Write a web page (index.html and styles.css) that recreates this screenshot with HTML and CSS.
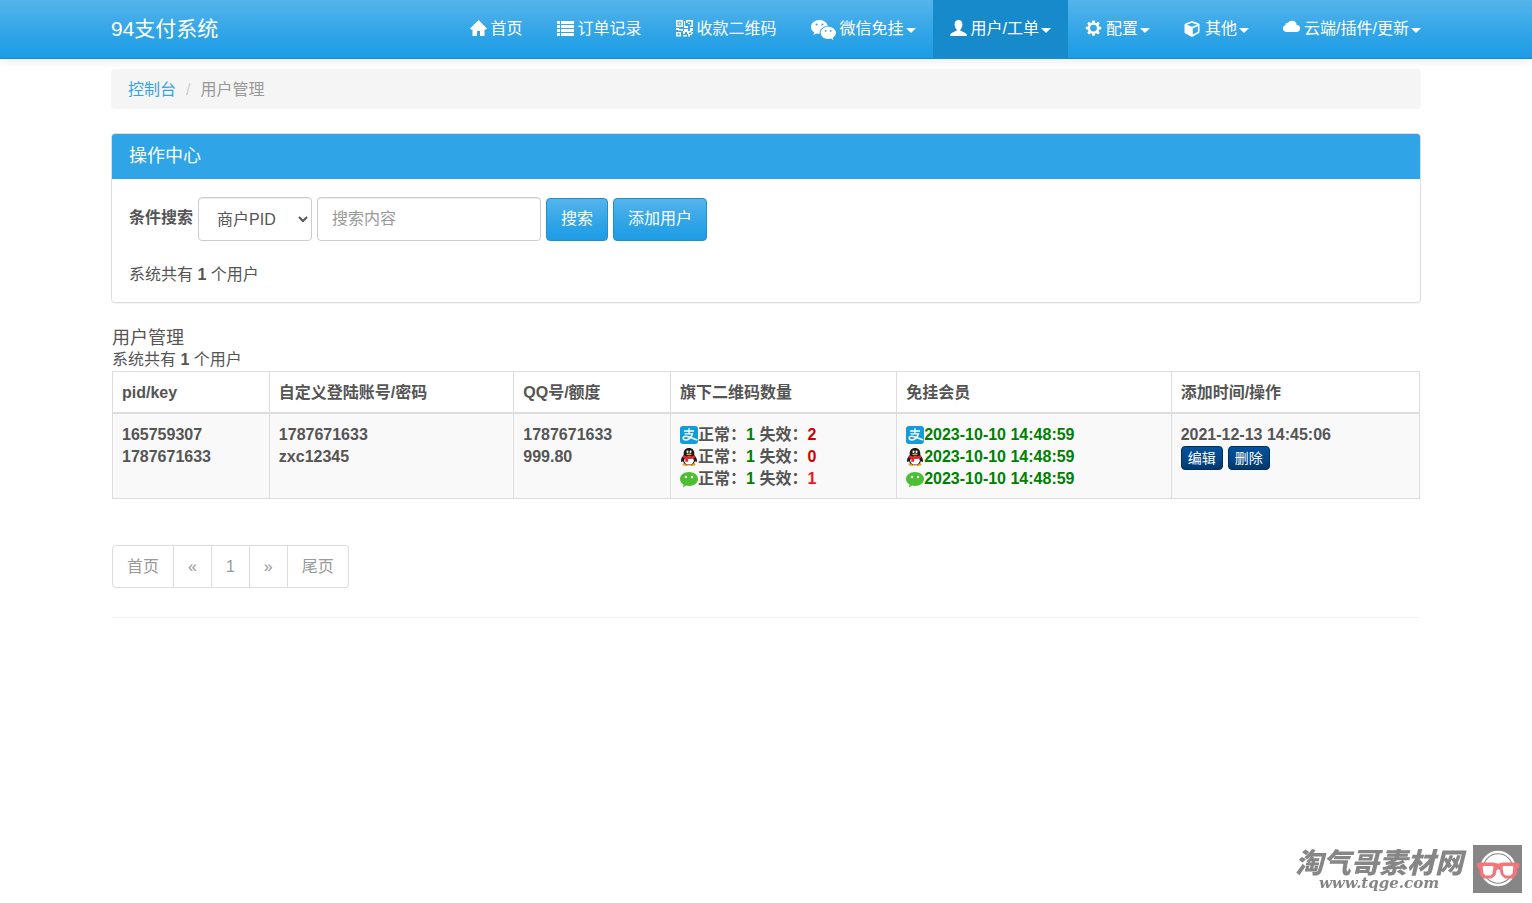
FILE: index.html
```html
<!DOCTYPE html>
<html lang="zh-CN">
<head>
<meta charset="utf-8">
<title>用户管理</title>
<link rel="stylesheet" href="styles.css">
</head>
<body>
<svg class="sprite" aria-hidden="true">
  <symbol id="alipay" viewBox="0 0 18 18">
    <rect width="18" height="18" rx="3" fill="#169bd9"/>
    <g fill="none" stroke="#fff" stroke-linecap="round">
      <path d="M4.500 5h9M9 2.600v5.200M5 7.800h7.600" stroke-width="1.300"/>
      <path d="M12.400 7.800c-1 3.400-3.400 6.200-6.600 6.200-3.600 0-3.300-3.800 0-3.800 3 0 5.700 2 11 3.600" stroke-width="1.500"/>
    </g>
  </symbol>
  <symbol id="qq" viewBox="0 0 18 18">
    <ellipse cx="6" cy="16.300" rx="3.600" ry="1.600" fill="#f4a024"/>
    <ellipse cx="12" cy="16.300" rx="3.600" ry="1.600" fill="#f4a024"/>
    <path d="M9 0c3.600 0 5.300 2.500 5.300 5.300v2c1.600 1.500 3 4 2.700 6-.3 1.300-1.300.7-2-.4-.6 2.700-2.800 4.100-6 4.100s-5.400-1.400-6-4.100c-.7 1.100-1.700 1.700-2 .4-.3-2 1.100-4.500 2.700-6v-2C3.700 2.500 5.400 0 9 0z" fill="#1c1a1a"/>
    <ellipse cx="9" cy="12.600" rx="4.800" ry="4" fill="#fff"/>
    <ellipse cx="7.500" cy="3.800" rx="1" ry="1.400" fill="#fff"/>
    <ellipse cx="10.500" cy="3.800" rx="1" ry="1.400" fill="#fff"/>
    <ellipse cx="9" cy="6.300" rx="2.800" ry=".9" fill="#f4a024"/>
    <path d="M3.400 7.300c3.200 1.700 8 1.700 11.200 0l.8 2.200c-2.100 1.300-4.700 1.600-7.300 1.500v2.700H5.300v-3.200l-2.700-1z" fill="#e5252c"/>
  </symbol>
  <symbol id="wx" viewBox="0 0 18 18">
    <path d="M9 2c5 0 9 3.100 9 7s-4 7-9 7c-1 0-2-.1-2.900-.4L3 17.500l.6-2.900C1.400 13.300 0 11.300 0 9c0-3.900 4-7 9-7z" fill="#4cbf33"/>
    <circle cx="6" cy="7" r="1.200" fill="#fff"/><circle cx="12" cy="7" r="1.200" fill="#fff"/>
  </symbol>
</svg>

<header class="navbar">
  <div class="container navbar-inner">
    <a class="brand" href="#">94支付系统</a>
    <nav class="nav">
      <a href="#"><svg class="ico" viewBox="0 0 17 17"><path fill="currentColor" d="M8.500 0 17 8.500l-.9.900h-1.600V16H10v-5H7v5H2.500V9.400H.9L0 8.500z"/></svg>首页</a>
      <a href="#"><svg class="ico" viewBox="0 0 17 17"><path fill="currentColor" d="M0 1h3v3H0zm4 0h13v3H4zM0 5h3v3H0zm4 0h13v3H4zM0 9h3v3H0zm4 0h13v3H4zm-4 4h3v3H0zm4 0h13v3H4z"/></svg>订单记录</a>
      <a href="#"><svg class="ico" viewBox="0 0 17 17"><path fill="currentColor" fill-rule="evenodd" d="M0 0h7v7H0zm1.500 1.500v4h4v-4zM2.500 2.500h2v2h-2zM10 0h7v7h-3V5.500h1.500v-4h-4V3H10zM8 1h1v5h3v2H8zM12 3h2v1h-2zM0 8h3v1h4v2H5v-.5H2V10H0zM0 12h5v4.500H0zm1.500 1.200v2h2v-2zM8 9h4v2h2V8h3v3h-1.500v1.500H13V14h-2v-2H9v2H7v-3h1zM8 15h3v1.500H7V15zM15 12h2v1.500h-1V15h-2v1.500h-2V14h3z"/></svg>收款二维码</a>
      <a href="#"><svg class="ico ico-wide" viewBox="0 0 25 21"><path fill="currentColor" fill-rule="evenodd" d="M8.500 1C3.800 1 0 4 0 7.900c0 2.200 1.200 4.100 3.100 5.400L2.400 16l3-1.600c1 .3 2.100.4 3.200.4-.3-4.700 3.800-7.900 8.200-7.900C16 3.500 12.600 1 8.500 1zM5.600 4.400a1.100 1.100 0 1 1 0 2.200 1.100 1.100 0 0 1 0-2.200zm5.800 0a1.100 1.100 0 1 1 0 2.200 1.100 1.100 0 0 1 0-2.200zM17.200 7.700c-4 0-7.500 2.700-7.500 6.100s3.400 6.200 7.500 6.200c.9 0 1.700-.1 2.500-.4l2.700 1.400-.6-2.300c1.600-1.200 3.200-2.800 3.200-4.900 0-3.400-3.700-6.100-7.800-6.100zM14.600 11a.9.900 0 1 1 0 1.800.9.900 0 0 1 0-1.800zm5.100 0a.9.900 0 1 1 0 1.800.9.900 0 0 1 0-1.800z"/></svg>微信免挂<i class="caret"></i></a>
      <a href="#" class="active"><svg class="ico" viewBox="0 0 17 17"><path fill="currentColor" d="M8.500 0C11 0 12.400 1.800 12.400 4.300c0 2.200-.7 4-2 5.200v1.300c2.600 1 5.600 2.200 6.200 3.400.3.600.4 1.800.4 1.800H0s.1-1.200.4-1.800c.6-1.200 3.600-2.400 6.200-3.400V9.500c-1.300-1.200-2-3-2-5.200C4.600 1.800 6 0 8.500 0z"/></svg>用户/工单<i class="caret"></i></a>
      <a href="#"><svg class="ico" viewBox="0 0 17 17"><path fill="currentColor" fill-rule="evenodd" d="M7.300.5h2.400l.3 2 1.300.6 1.800-1.300 1.600 1.600-1.200 1.800.6 1.300 2.100.4v2.400l-2.100.4-.6 1.300 1.200 1.700-1.600 1.700-1.800-1.200-1.300.5-.3 2.100H7.300L7 13.700l-1.300-.5-1.800 1.200-1.600-1.700L3.500 11l-.6-1.300-2.100-.4V6.900l2.100-.4.6-1.300-1.200-1.800 1.600-1.600 1.800 1.300L7 2.500zM8.500 4.700a3.400 3.400 0 1 0 0 6.800 3.400 3.400 0 0 0 0-6.800z"/></svg>配置<i class="caret"></i></a>
      <a href="#"><svg class="ico" viewBox="0 0 17 17"><path fill="currentColor" fill-rule="evenodd" d="M8 1l7 2.500.5.800v8l-.5.800L8 17l-7-3.700-.5-.8v-8L1 3.700zM8 2.800L2.700 4.700 8 6.800l5.300-2.100zM8.800 8.200v6.400l5.100-2.800V6.200z"/></svg>其他<i class="caret"></i></a>
      <a href="#"><svg class="ico ico-cloud" viewBox="0 0 17 17"><path fill="currentColor" d="M3.500 14A3.500 3.500 0 0 1 2.200 7.200 2.600 2.600 0 0 1 5 4.800 4.700 4.700 0 0 1 13.600 7 3.500 3.500 0 0 1 13.600 14z"/></svg>云端/插件/更新<i class="caret"></i></a>
    </nav>
  </div>
</header>

<main class="container">
  <nav class="breadcrumb"><a href="#">控制台</a><span class="sep">/</span><span>用户管理</span></nav>

  <section class="panel">
    <h1 class="panel-heading">操作中心</h1>
    <div class="panel-body">
      <form class="search">
        <label for="field">条件搜索</label>
        <select id="field" class="control field"><option>商户PID</option></select>
        <input class="control keyword" type="text" placeholder="搜索内容" aria-label="搜索内容">
        <button class="btn" type="button">搜索</button>
        <button class="btn" type="button">添加用户</button>
      </form>
      <p class="total">系统共有 <b>1</b> 个用户</p>
    </div>
  </section>

  <section class="users">
    <h2>用户管理</h2>
    <p>系统共有 <b>1</b> 个用户</p>
    <table>
      <colgroup><col class="c-pid"><col class="c-login"><col class="c-qq"><col class="c-codes"><col class="c-member"><col class="c-time"></colgroup>
      <thead>
        <tr><th>pid/key</th><th>自定义登陆账号/密码</th><th>QQ号/额度</th><th>旗下二维码数量</th><th>免挂会员</th><th>添加时间/操作</th></tr>
      </thead>
      <tbody>
        <tr>
          <td>165759307<br>1787671633</td>
          <td>1787671633<br>zxc12345</td>
          <td>1787671633<br>999.80</td>
          <td>
            <div class="line"><svg class="pay"><use href="#alipay"/></svg>正常：<span class="ok">1</span>&nbsp;失效：<span class="bad">2</span></div>
            <div class="line"><svg class="pay"><use href="#qq"/></svg>正常：<span class="ok">1</span>&nbsp;失效：<span class="bad">0</span></div>
            <div class="line"><svg class="pay"><use href="#wx"/></svg>正常：<span class="ok">1</span>&nbsp;失效：<span class="warn">1</span></div>
          </td>
          <td>
            <div class="line ok"><svg class="pay"><use href="#alipay"/></svg>2023-10-10 14:48:59</div>
            <div class="line ok"><svg class="pay"><use href="#qq"/></svg>2023-10-10 14:48:59</div>
            <div class="line ok"><svg class="pay"><use href="#wx"/></svg>2023-10-10 14:48:59</div>
          </td>
          <td>2021-12-13 14:45:06
            <div class="actions"><button class="btn-xs" type="button">编辑</button><button class="btn-xs" type="button">删除</button></div>
          </td>
        </tr>
      </tbody>
    </table>
    <nav class="pager"><a href="#">首页</a><a href="#">«</a><a href="#">1</a><a href="#">»</a><a href="#">尾页</a></nav>
    <hr>
  </section>
</main>

<aside class="watermark">
  <div class="mark-text"><span class="mark-name">淘气哥素材网</span><span class="mark-url">www.tqge.com</span></div>
  <svg class="mark-logo" viewBox="0 0 49 48">
    <rect width="49" height="48" fill="#868686"/>
    <circle cx="25" cy="23.500" r="16.500" fill="none" stroke="#fff" stroke-width="2.400"/>
    <circle cx="25" cy="23.500" r="14.200" fill="#fff"/>
    <path d="M4 18.500L9 18h11l4.500 1h1L30 18h11l5 .5v3.500l-2 1.500-1 6.500-3 3h-8l-3.500-3-1.500-6h-3.500l-1.500 6-3.500 3h-8l-3-3-1-6.500-2-1.500z" fill="#f0777b" stroke="#f0777b" stroke-linejoin="round"/>
    <path d="M10.500 21h9l1 1-1 6.500-2 2h-5l-2-2-.8-6.500zM30.500 21h9l.8 1-.8 6.500-2 2h-5l-2-2-1-6.500z" fill="#fff"/>
  </svg>
</aside>
</body>
</html>
```

FILE: styles.css
```css
* { box-sizing: border-box; }

body {
  margin: 0;
  background: #fff;
  color: #555;
  font: 16px/22px "Liberation Sans", "Noto Sans CJK SC", sans-serif;
}

a { color: #2fa4e7; text-decoration: none; }
h1, h2, p { margin: 0; font-weight: 400; }
h1, h2 { font-size: 18px; }
.sprite { display: none; }

.container {
  width: calc(100% - 32px);
  max-width: 1310px;
  margin: 0 auto;
}

/* top bar */
.navbar {
  background: linear-gradient(#54b4eb, #2fa4e7 60%, #1d9ce5);
  border-bottom: 1px solid #178acc;
  box-shadow: 0 1px 10px rgba(0, 0, 0, .1);
}
.navbar-inner { display: flex; justify-content: space-between; }
.brand {
  display: flex;
  align-items: center;
  color: #fff;
  font-size: 21px;
  white-space: nowrap;
}
.nav { display: flex; margin-right: -17px; }
.nav a {
  display: flex;
  align-items: center;
  height: 58px;
  padding: 0 17px;
  color: #fff;
  white-space: nowrap;
}
.nav .active { background: #178acc; }
.ico { width: 17px; height: 17px; margin: 0 4px 2px 0; }
.ico-wide { width: 25px; height: 21px; margin-bottom: 0; }
.ico-cloud { margin-bottom: 5px; }
.caret {
  margin: 3px 0 0 2px;
  border: 5px solid transparent;
  border-top-color: #fff;
  border-bottom: 0;
}

.breadcrumb {
  display: flex;
  margin: 10px 0 24px;
  padding: 10px 17px 8px;
  border-radius: 4px;
  background: #f5f5f5;
  color: #999;
}
.sep { padding: 0 10px; color: #ccc; }

/* search panel */
.panel {
  border: 1px solid #ddd;
  border-radius: 4px;
  box-shadow: 0 1px 1px rgba(0, 0, 0, .05);
}
.panel-heading {
  padding: 11px 17px 12px;
  border-radius: 3px 3px 0 0;
  background: #2fa4e7;
  color: #fff;
}
.panel-body { padding: 18px 17px 16px; }
.search { display: flex; flex-wrap: wrap; align-items: center; gap: 5px; }
.search label { padding-bottom: 2px; font-weight: 700; }
.control {
  height: 44px;
  padding: 8px 14px;
  border: 1px solid #ccc;
  border-radius: 4px;
  background: #fff;
  color: #555;
  font: inherit;
  box-shadow: inset 0 1px 1px rgba(0, 0, 0, .075);
}
.control::placeholder { color: #999; }
.field { width: 114px; }
.keyword { width: 224px; }
.btn {
  height: 43px;
  padding: 0 14px;
  border: 1px solid #1b92d6;
  border-radius: 4px;
  background: linear-gradient(#54b4eb, #2fa4e7 60%, #1d9ce5);
  color: #fff;
  font: inherit;
}
.total { padding-top: 23px; }

/* user table */
.users { padding: 24px 1px 0; }
table {
  width: 100%;
  table-layout: fixed;
  border-collapse: collapse;
}
th, td {
  padding: 10px 9px 8px;
  border: 1px solid #ddd;
  font-weight: 700;
  text-align: left;
  vertical-align: top;
}
th { border-bottom-width: 2px; }
td { background: #f9f9f9; }
.c-pid, .c-qq { width: 12%; }
.c-login { width: 18.7%; }
.c-codes { width: 17.3%; }
.c-member { width: 21%; }
.c-time { width: 19%; }
.line { display: flex; align-items: center; height: 22px; white-space: nowrap; }
.pay { flex: none; width: 18px; height: 18px; }
.ok { color: green; }
.bad { color: #c00; }
.warn { color: #e61a1a; }
.actions { display: flex; gap: 5px; height: 22px; }
.btn-xs {
  height: 24px;
  padding: 0 6px;
  border: 1px solid #02305c;
  border-radius: 4px;
  background: linear-gradient(#04519b, #044687 60%, #033769);
  color: #fff;
  font: 14px/20px "Liberation Sans", "Noto Sans CJK SC", sans-serif;
}

.pager { display: flex; margin-top: 46px; }
.pager a {
  padding: 10px 14px;
  border: 1px solid #ddd;
  border-left-width: 0;
  color: #999;
  line-height: 21px;
}
.pager a:first-child { border-left-width: 1px; border-radius: 4px 0 0 4px; }
.pager a:last-child { border-radius: 0 4px 4px 0; }
hr { margin: 29px 0 0; border: 0; border-top: 1px solid #f2f2f2; }

/* site mark over the page corner */
.watermark {
  position: fixed;
  right: 10px;
  bottom: 10px;
  display: flex;
  align-items: center;
  gap: 10px;
  color: #868686;
}
.mark-text { display: flex; flex-direction: column; align-items: center; }
.mark-name { font: italic 900 28px/28px "Noto Sans CJK SC", sans-serif; }
.mark-url { font: italic 700 15px/16px "DejaVu Serif", serif; }
.mark-logo { width: 49px; height: 48px; }
```
